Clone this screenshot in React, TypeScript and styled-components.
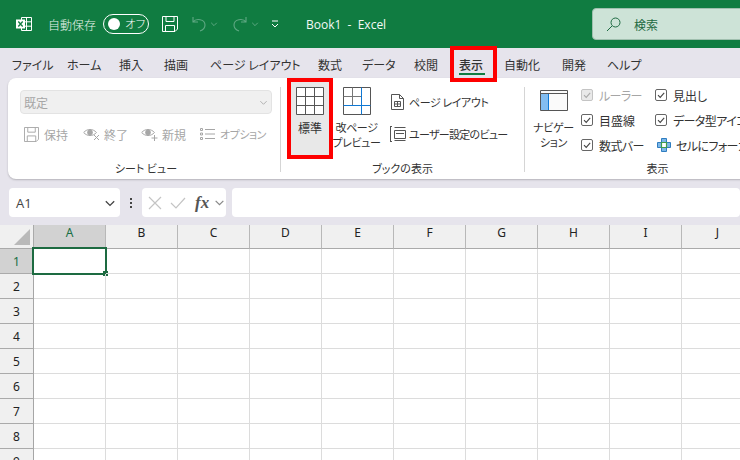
import React from "react";
import styled, { createGlobalStyle } from "styled-components";

const Global = createGlobalStyle`
  html, body { margin: 0; padding: 0; width: 740px; height: 460px; overflow: hidden; background: #e6e4ec; }
  body { font-family: "Noto Sans CJK JP", "Noto Sans", sans-serif; font-size: 12px; font-feature-settings: "palt"; color: #333; }
  * { box-sizing: border-box; }
`;

const Page = styled.div`
  position: relative; width: 740px; height: 460px; overflow: hidden;
  display: flex; flex-direction: column; background: #e6e4ec;
`;

/* title bar */
const TitleBar = styled.header`
  height: 48px; flex: none; background: #107c41; color: #fff;
  display: flex; align-items: center; padding-left: 16px;
`;
const AppIcon = styled.svg`display: block; flex: none;`;
const AutoSave = styled.span`margin-left: 16px; font-size: 12px; width: 48px; flex: none; white-space: nowrap; font-weight: 300; color: #e8f3ec;`;
const Toggle = styled.div`
  margin-left: 7px; width: 46px; height: 20px; flex: none; border: 1px solid #fff; border-radius: 10px;
  display: flex; align-items: center; padding-left: 4px; gap: 5px; font-size: 11.5px; font-weight: 300; line-height: 1; white-space: nowrap;
`;
const Knob = styled.i`display: block; width: 12px; height: 12px; flex: none; border-radius: 50%; background: #fff;`;
const QuickIcon = styled.svg<{ $ml: number }>`margin-left: ${p => p.$ml}px; display: block; flex: none;`;
const DocTitle = styled.span`
  margin-left: 27px; width: 286px; flex: none; font-family: "Open Sans", sans-serif; font-size: 12px; white-space: pre; color: #f4f9f6;
`;
const SearchBox = styled.div`
  width: 160px; height: 32px; background: #cde3d7; border: 1px solid #9fbfae; border-radius: 4px; flex: none;
  display: flex; align-items: center; padding-left: 13px; gap: 13px; color: #1d6a42; font-size: 12px;
`;

/* tabs */
const Tabs = styled.nav`
  height: 30px; flex: none; display: flex; align-items: center; padding-left: 12px; padding-top: 2px;
`;
const Tab = styled.span<{ $w: number; $active?: boolean }>`
  position: relative; width: ${p => p.$w}px; flex: none; text-align: left; white-space: nowrap; font-size: 12px; color: #333;
  font-weight: ${p => (p.$active ? 500 : 400)};
  ${p => p.$active && `&::after { content: ""; position: absolute; left: 0; width: 26px; bottom: -2px; height: 2px; background: #107c41; }`}
`;

/* ribbon */
const Ribbon = styled.section`
  height: 101px; flex: none; width: 780px; margin-left: 8px; background: #fff; border-radius: 8px;
  box-shadow: 0 1px 2px rgba(0,0,0,.22); display: flex; overflow: hidden;
`;
const Group = styled.div<{ $w: number }>`
  width: ${p => p.$w}px; flex: none; display: flex; flex-direction: column; position: relative;
`;
const GroupBody = styled.div`height: 80px; flex: none; display: flex;`;
const GroupLabel = styled.div<{ $shift?: number; $w?: number }>`
  height: 21px; text-align: center; font-size: 11px; line-height: 21px; color: #333; padding-left: ${p => p.$shift ?? 0}px;
  ${p => p.$w && `width: ${p.$w}px;`}
`;
const Divider = styled.div`width: 1px; height: 85px; margin-top: 9px; background: #d5d5d5; flex: none;`;

const ViewPane = styled.div`padding: 12px 0 0 12px; display: flex; flex-direction: column; width: 100%;`;
const Combo = styled.div`
  width: 252px; height: 24px; background: #f0f0f0; border: 1px solid #e3e3e3; border-radius: 4px;
  display: flex; align-items: center; justify-content: space-between; padding: 0 3px; color: #a6a6a6; font-size: 12px;
`;
const SheetRow = styled.div`display: flex; align-items: center; margin-top: 10px; height: 20px; color: #a6a6a6; font-size: 12px;`;
const SheetBtn = styled.span<{ $w: number; $gap: number; $pl: number; $tight?: boolean }>`
  width: ${p => p.$w}px; padding-left: ${p => p.$pl}px; flex: none; display: flex; align-items: center; gap: ${p => p.$gap}px; white-space: nowrap;
  ${p => p.$tight && "font-size: 11px; letter-spacing: -0.5px;"}
`;

const BookBody = styled(GroupBody)`padding-left: 9px;`;
const LargeButton = styled.div<{ $selected?: boolean; $w: number; $top?: number }>`
  width: ${p => p.$w}px; height: 74px; margin-top: 3px; flex: none; display: flex; flex-direction: column; align-items: center;
  background: ${p => (p.$selected ? "#e8e8e8" : "transparent")}; padding-top: ${p => p.$top ?? 6}px; line-height: 15px; text-align: center; color: #333;
  svg { display: block; flex: none; margin-bottom: 5px; }
`;
const LargeLabel = styled.span<{ $size?: number; $track?: number; $mt?: number }>`
  font-size: ${p => p.$size ?? 12}px; letter-spacing: ${p => p.$track ?? 0}px; margin-top: ${p => p.$mt ?? 0}px; white-space: nowrap;
`;
const SideColumn = styled.div`margin-left: 7px; padding-top: 13px; display: flex; flex-direction: column; gap: 11px;`;
const SideItem = styled.div<{ $gap: number; $pl: number; $track?: number }>`
  display: flex; align-items: center; height: 21px; gap: ${p => p.$gap}px; padding-left: ${p => p.$pl}px; white-space: nowrap;
  font-size: 11px; letter-spacing: ${p => p.$track ?? 0}px; color: #333;
`;

const NavBody = styled(GroupBody)`padding-left: 4px;`;
const CheckColumn = styled.div<{ $w: number; $ml?: number }>`
  width: ${p => p.$w}px; margin-left: ${p => p.$ml ?? 0}px; flex: none; padding-top: 7px; display: flex; flex-direction: column; gap: 5px;
`;
const CheckRow = styled.div<{ $disabled?: boolean; $focus?: boolean; $track?: number }>`
  height: 20px; display: flex; align-items: center; white-space: nowrap; font-size: 12px;
  gap: ${p => (p.$focus ? 5 : 6)}px; margin-left: ${p => (p.$focus ? 2 : 0)}px;
  letter-spacing: ${p => p.$track ?? 0}px;
  color: ${p => (p.$disabled ? "#a6a6a6" : "#333")};
`;
const Box = styled.span<{ $disabled?: boolean }>`
  width: 12px; height: 12px; flex: none; border-radius: 2px; display: flex; align-items: center; justify-content: center;
  border: 1px solid ${p => (p.$disabled ? "#c4c4c4" : "#666")}; background: ${p => (p.$disabled ? "#e9e9e9" : "#fff")};
`;

/* formula bar */
const FormulaBar = styled.div`
  height: 46px; flex: none; display: flex; align-items: flex-start; padding: 9px 0 0 9px;
`;
const FBox = styled.div<{ $w?: number }>`
  width: ${p => (p.$w ? `${p.$w}px` : "auto")}; flex: ${p => (p.$w ? "none" : "1")}; height: 29px; background: #fff; border-radius: 4px;
  display: flex; align-items: center;
`;
const FGap = styled.span`width: 6px; flex: none;`;
const NameText = styled.span`flex: 1; padding-left: 7px; font-family: "Open Sans", sans-serif; font-size: 13px; color: #444;`;
const NameChevron = styled.span`margin-right: 4px; display: flex;`;
const FxChevron = styled.span`margin-left: 5px; display: flex;`;
const FxMark = styled.svg<{ $ml: number }>`display: block; flex: none; margin-left: ${p => p.$ml}px;`;
const Dots = styled.div`
  width: 22px; height: 29px; flex: none; display: flex; flex-direction: column; align-items: center; justify-content: center; gap: 2px;
  i { width: 2px; height: 2px; background: #444; display: block; }
`;
const Fx = styled.span`
  font-family: "Liberation Serif", serif; font-style: italic; font-weight: 700; font-size: 17px; color: #555; margin-left: 9px;
`;

/* sheet */
const Sheet = styled.div`
  display: grid; grid-template-columns: 34px repeat(10, 72px); grid-auto-rows: 25px; background: #fff; flex: none;
  font-family: "Noto Sans", sans-serif; font-size: 12px; color: #222;
`;
const Corner = styled.div`
  height: 24px; background: #f0f0f0; border-right: 1px solid #aaa; border-bottom: 1px solid #aaa; position: relative; overflow: hidden;
  &::after { content: ""; position: absolute; right: 3px; bottom: 3px; border-style: solid; border-width: 0 0 16px 16px; border-color: transparent transparent #b9b9b9 transparent; }
`;
const ColHead = styled.div<{ $on?: boolean }>`
  height: 24px; padding-bottom: 8px; background: ${p => (p.$on ? "#d2d2d2" : "#f0f0f0")}; border-right: 1px solid #b8b8b8; border-bottom: 1px solid #aaa;
  display: flex; align-items: center; justify-content: center; color: ${p => (p.$on ? "#176f45" : "#222")};
`;
const RowHead = styled.div<{ $on?: boolean }>`
  margin-top: -1px; height: 25px; background: ${p => (p.$on ? "#d2d2d2" : "#f0f0f0")}; border-right: 1px solid #a6a6a6; border-bottom: 1px solid #aaa;
  display: flex; align-items: center; justify-content: center; color: ${p => (p.$on ? "#176f45" : "#222")};
`;
const Cell = styled.div`
  margin-top: -1px; height: 25px; position: relative; border-right: 1px solid #dcdcdc; border-bottom: 1px solid #dcdcdc;
`;
const Cursor = styled.div`
  position: absolute; left: -2px; top: -2px; right: -2px; bottom: -2px; border: 2px solid #1d6b41;
  &::after { content: ""; position: absolute; right: -3px; bottom: -3px; width: 5px; height: 5px; background: #1d6b41; }
`;
const Highlight = styled.div<{ $x: number; $y: number; $w: number; $h: number }>`
  position: absolute; left: ${p => p.$x}px; top: ${p => p.$y}px; width: ${p => p.$w}px; height: ${p => p.$h}px;
  border: 4px solid #fe0000; pointer-events: none;
`;

const Chev = ({ c = "#666", s = 10 }: { c?: string; s?: number }) => (
  <svg width={s} height={s} viewBox="0 0 10 10" fill="none" stroke={c} strokeWidth="1.1"><path d="M1.5 3.5 5 7l3.5-3.5" /></svg>
);
const Check = ({ c = "#444" }: { c?: string }) => (
  <svg width="10" height="10" viewBox="0 0 10 10" fill="none" stroke={c} strokeWidth="1.1"><path d="M2 5.2 4.2 7.4 8.2 2.8" /></svg>
);
const SaveIcon = ({ c, s = 16 }: { c: string; s?: number }) => (
  <svg width={s} height={s} viewBox="0 0 16 16" fill="none" stroke={c} strokeWidth="1">
    <path d="M.5.5h15v12.5l-2.5 2.5H.5z" /><path d="M4 .5v5h8v-5M3.5 15.5v-6h9v6" />
  </svg>
);
const Eye = ({ badge, c = "#a6a6a6" }: { badge: "x" | "+"; c?: string }) => (
  <svg width="18" height="14" viewBox="0 0 18 14" fill="none" stroke={c} strokeWidth="1">
    <path d="M.7 5.5C4 1.5 10 1.5 13.5 5.5 10 9.5 4 9.5.7 5.5z" />
    <circle cx="7" cy="5.5" r="2.4" fill={c} />
    {badge === "x" ? <path d="M11 8l5 5M16 8l-5 5" /> : <path d="M13.5 8v6M10.5 11h6" />}
  </svg>
);
const ListIcon = () => (
  <svg width="15" height="14" viewBox="0 0 15 14" fill="none" stroke="#a6a6a6" strokeWidth="1">
    <path d="M.5 1.5h2v2h-2zM.5 6h2v2h-2zM.5 10.5h2v2h-2zM5 2.5h10M5 7h10M5 11.5h10" />
  </svg>
);
const GridIcon = () => (
  <svg width="28" height="28" viewBox="0 0 28 28" fill="#fff" stroke="#555" strokeWidth="1">
    <path d="M.5.5h27v27H.5z" /><path d="M9.5.5v27M18.5.5v27M.5 9.5h27M.5 18.5h27" fill="none" />
  </svg>
);
const BreakIcon = () => (
  <svg width="28" height="28" viewBox="0 0 28 28" fill="none">
    <path d="M.5.5h27v27H.5z" fill="#fff" stroke="#555" />
    <path d="M9.5.5v18M.5 9.5h18" stroke="#777" />
    <path d="M18.5.5v27M.5 18.5h27" stroke="#0f78d4" />
  </svg>
);
const PageIcon = () => (
  <svg width="13" height="16" viewBox="0 0 13 16" fill="none" stroke="#555" strokeWidth="1">
    <path d="M.5.5h8l4 4v11H.5z" /><path d="M8.5.5v4h4M3.5 7.5h6v5h-6zM6.5 7.5v5M3.5 10h6" />
  </svg>
);
const CustomIcon = () => (
  <svg width="16" height="16" viewBox="0 0 16 16" fill="none" stroke="#555" strokeWidth="1">
    <path d="M.5.5v15M0 .5h2M0 15.5h2M4.5 1.5h11M4.5 14.5h11" /><path d="M4.5 4.5h11v8h-11z" /><path d="M6 7.5h8" />
  </svg>
);
const NavIcon = () => (
  <svg width="28" height="21" viewBox="0 0 28 21">
    <path d="M.5.5h27v20H.5z" fill="#fafafa" stroke="#555" />
    <path d="M1 3.5h8V20H1z" fill="#83bdf0" />
    <path d="M.5 3.5h27" stroke="#555" /><path d="M8.5 4v16" stroke="#0f78d4" />
  </svg>
);
const FocusIcon = () => (
  <svg width="14" height="14" viewBox="0 0 14 14" stroke="#2f7dc0" strokeWidth="1" fill="#7db7e8">
    <path d="M4.5.5h5v4h4v5h-4v4h-5v-4h-4v-5h4z" />
    <path d="M4.5 4.5h5v5h-5z" fill="#fff" stroke="#3f9d4c" strokeWidth="1.2" />
  </svg>
);

const tabs: [string, number, boolean?][] = [
  ["ファイル", 55], ["ホーム", 52], ["挿入", 45], ["描画", 46], ["ページ レイアウト", 108], ["数式", 44],
  ["データ", 52], ["校閲", 45], ["表示", 45, true], ["自動化", 58], ["開発", 45], ["ヘルプ", 40],
];
const cols = "ABCDEFGHIJ".split("");
const rows = [1, 2, 3, 4, 5, 6, 7, 8, 9];

export default function App() {
  return (
    <Page>
      <Global />
      <TitleBar>
        <AppIcon width="16" height="16" viewBox="0 0 16 16">
          <path d="M5.5 1.5h10v13h-10zM5.5 5.8h10M5.5 10.2h10M10.5 1.5v13" fill="none" stroke="#fff" />
          <rect x="0" y="3.5" width="9" height="9" fill="#fff" />
          <path d="M2.3 5.5 6.7 10.5M6.7 5.5 2.3 10.5" stroke="#107c41" strokeWidth="1.3" />
        </AppIcon>
        <AutoSave>自動保存</AutoSave>
        <Toggle><Knob /><span>オフ</span></Toggle>
        <QuickIcon $ml={13} width="16" height="16" viewBox="0 0 16 16" fill="none" stroke="#fff" strokeWidth="1">
          <path d="M.5.5h15v12.5l-2.5 2.5H.5z" /><path d="M4 .5v5h8v-5M3.5 15.5v-6h9v6" />
        </QuickIcon>
        <QuickIcon $ml={14} width="14" height="16" viewBox="0 0 14 16" fill="none" stroke="#5fa883" strokeWidth="1.1">
          <path d="M1 1v5h5M1 6c3-4 12-3 12 3 0 3-2 5-5 6" />
        </QuickIcon>
        <QuickIcon $ml={4} width="8" height="8" viewBox="0 0 10 10" fill="none" stroke="#5fa883" strokeWidth="1.2"><path d="M1.5 3.5 5 7l3.5-3.5" /></QuickIcon>
        <QuickIcon $ml={15} width="14" height="16" viewBox="0 0 14 16" fill="none" stroke="#5fa883" strokeWidth="1.1">
          <path d="M13 1v5H8M13 6C10 2 1 3 1 9c0 3 2 5 5 6" />
        </QuickIcon>
        <QuickIcon $ml={4} width="8" height="8" viewBox="0 0 10 10" fill="none" stroke="#5fa883" strokeWidth="1.2"><path d="M1.5 3.5 5 7l3.5-3.5" /></QuickIcon>
        <QuickIcon $ml={12} width="8" height="8" viewBox="0 0 8 8" fill="none" stroke="#fff" strokeWidth="1"><path d="M1 1h6M1 4l3 3 3-3" /></QuickIcon>
        <DocTitle>Book1  -  Excel</DocTitle>
        <SearchBox>
          <svg width="15" height="15" viewBox="0 0 15 15" fill="none" stroke="#1d6a42" strokeWidth="1"><circle cx="9.5" cy="5.5" r="4.5" /><path d="M6 9 1 14" /></svg>
          <span>検索</span>
        </SearchBox>
      </TitleBar>

      <Tabs>
        {tabs.map(([t, w, a]) => <Tab key={t} $w={w} $active={a}>{t}</Tab>)}
      </Tabs>

      <Ribbon>
        <Group $w={272}>
          <GroupBody>
            <ViewPane>
              <Combo><span>既定</span><Chev c="#b0b0b0" s={9} /></Combo>
              <SheetRow>
                <SheetBtn $w={59} $pl={4} $gap={5}><SaveIcon c="#a6a6a6" s={15} />保持</SheetBtn>
                <SheetBtn $w={59} $pl={4} $gap={3}><Eye badge="x" />終了</SheetBtn>
                <SheetBtn $w={59} $pl={3} $gap={3}><Eye badge="+" />新規</SheetBtn>
                <SheetBtn $w={70} $pl={3} $gap={5} $tight><ListIcon />オプション</SheetBtn>
              </SheetRow>
            </ViewPane>
          </GroupBody>
          <GroupLabel $shift={4}>シート ビュー</GroupLabel>
        </Group>
        <Divider />
        <Group $w={243}>
          <BookBody>
            <LargeButton $selected $w={40}><GridIcon /><LargeLabel>標準</LargeLabel></LargeButton>
            <LargeButton $w={53}><BreakIcon /><LargeLabel $size={11} $track={-0.4}>改ページ<br />プレビュー</LargeLabel></LargeButton>
            <SideColumn>
              <SideItem $gap={5} $pl={1} $track={-0.4}><PageIcon /><span>ページ レイアウト</span></SideItem>
              <SideItem $gap={3} $pl={0} $track={-0.7}><CustomIcon /><span>ユーザー設定のビュー</span></SideItem>
            </SideColumn>
          </BookBody>
          <GroupLabel>ブックの表示</GroupLabel>
        </Group>
        <Divider />
        <Group $w={260}>
          <NavBody>
            <LargeButton $w={49} $top={9}><NavIcon /><LargeLabel $size={11} $mt={4} $track={-0.3}>ナビゲー<br />ション</LargeLabel></LargeButton>
            <CheckColumn $w={74} $ml={3}>
              <CheckRow $disabled $track={-0.6}><Box $disabled><Check c="#aaa" /></Box>ルーラー</CheckRow>
              <CheckRow><Box><Check /></Box>目盛線</CheckRow>
              <CheckRow $track={-0.6}><Box><Check /></Box>数式バー</CheckRow>
            </CheckColumn>
            <CheckColumn $w={130}>
              <CheckRow><Box><Check /></Box>見出し</CheckRow>
              <CheckRow $track={-0.6}><Box><Check /></Box>データ型アイコン</CheckRow>
              <CheckRow $focus $track={-0.6}><FocusIcon />セルにフォーカス</CheckRow>
            </CheckColumn>
          </NavBody>
          <GroupLabel $w={265}>表示</GroupLabel>
        </Group>
      </Ribbon>

      <FormulaBar>
        <FBox $w={111}><NameText>A1</NameText><NameChevron><Chev c="#444" s={12} /></NameChevron></FBox>
        <Dots><i /><i /><i /></Dots>
        <FBox $w={84}>
          <FxMark $ml={5} width="16" height="16" viewBox="0 0 16 16" fill="none" stroke="#c4c4c4" strokeWidth="1.2"><path d="M2 2l12 12M14 2 2 14" /></FxMark>
          <FxMark $ml={7} width="16" height="16" viewBox="0 0 16 16" fill="none" stroke="#c4c4c4" strokeWidth="1.2"><path d="M1 8l5 5L15 3" /></FxMark>
          <Fx>fx</Fx>
          <FxChevron><Chev c="#888" s={11} /></FxChevron>
        </FBox>
        <FGap />
        <FBox />
      </FormulaBar>

      <Sheet>
        <Corner />
        {cols.map((c, i) => <ColHead key={c} $on={i === 0}>{c}</ColHead>)}
        {rows.map(r => (
          <React.Fragment key={r}>
            <RowHead $on={r === 1}>{r}</RowHead>
            {cols.map((c, i) => (
              <Cell key={c}>{r === 1 && i === 0 && <Cursor />}</Cell>
            ))}
          </React.Fragment>
        ))}
      </Sheet>

      <Highlight $x={450} $y={46} $w={47} $h={36} />
      <Highlight $x={287} $y={78} $w={46} $h={81} />
    </Page>
  );
}
